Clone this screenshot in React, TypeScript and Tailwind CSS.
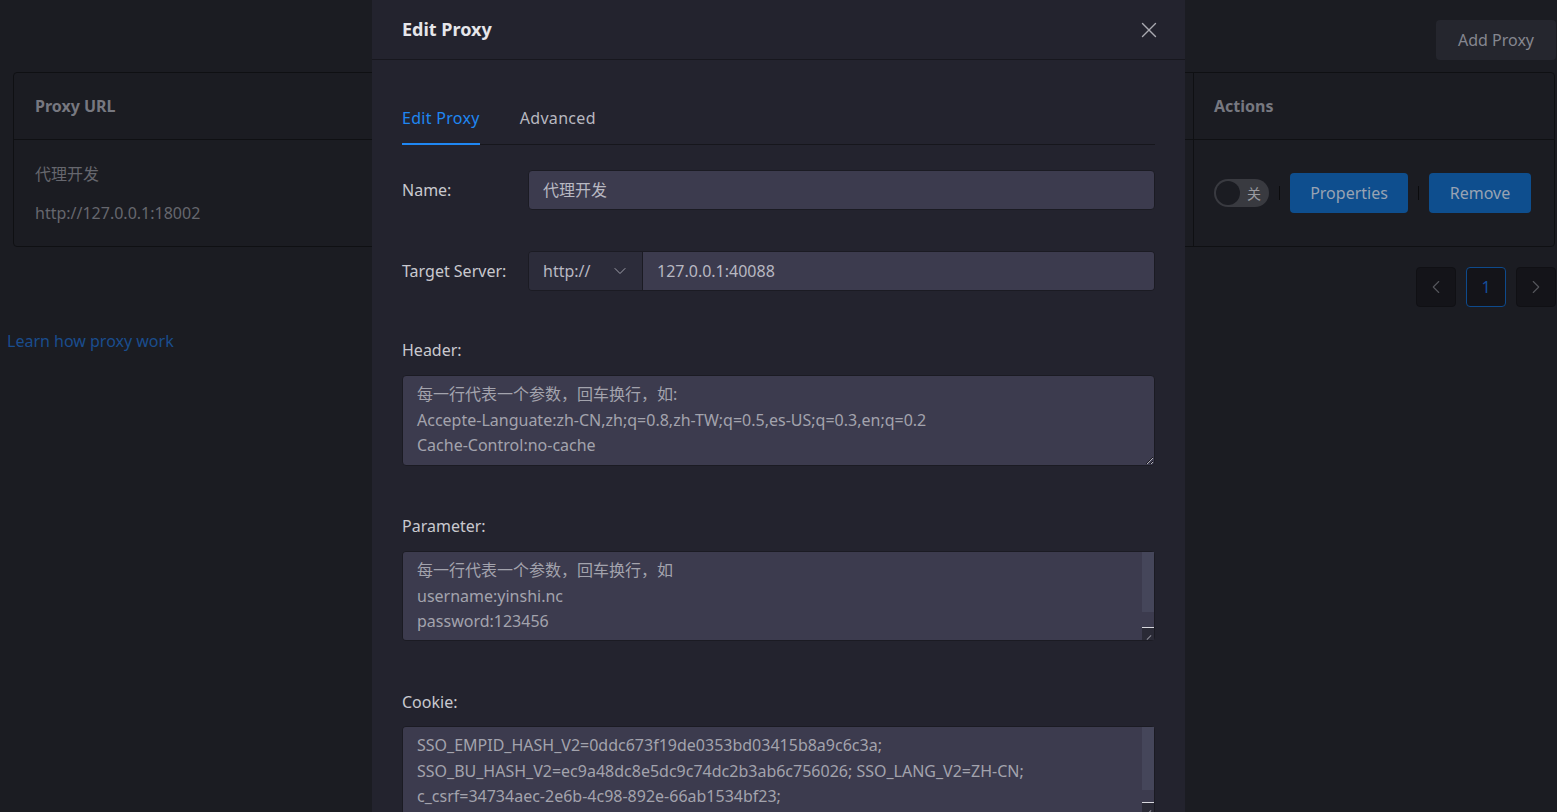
import { X, ChevronDown, ChevronLeft, ChevronRight } from "lucide-react";

const font = "[font-family:'Noto_Sans','Noto_Sans_CJK_SC',sans-serif]";

const areaClass =
  "block w-full rounded-[4px] border border-[#1b1b23] bg-[#3c3b4e] px-[14px] py-[6px] text-[16px] leading-[25.6px] text-[#a3a3ad] outline-none";

// fake scrollbar drawn over a textarea (headless browser hides real ones)
const FakeScroll = ({ thumb }: { thumb: number }) => (
  <div className="pointer-events-none absolute bottom-[1px] right-[1px] top-[1px] flex w-[12px] flex-col">
    <div className="bg-[#45465a]" style={{ height: thumb }} />
    <div className="flex-1" />
    <div className="relative h-[13px] border-t border-[#d8d8de] bg-[#2a2a36]">
      <span className="absolute bottom-[2px] right-[2px] h-px w-[6px] -rotate-45 bg-[#8a8a95]" />
    </div>
  </div>
);

export default function App() {
  return (
    <div className={`relative h-[812px] w-full overflow-hidden bg-[#1b1c22] ${font}`}>
      {/* page behind the dialog */}
      <div className="flex flex-col pt-[20px]">
        <div className="flex justify-end pr-[1px]">
          <button className="h-[40px] w-[120px] rounded-[4px] bg-[#25262e] text-[16px] text-[#858690]">
            Add Proxy
          </button>
        </div>
        <div className="ml-[13px] mr-[2px] mt-[12px] rounded-[4px] border border-[#0f1013]">
          <div className="flex h-[67px] border-b border-[#0f1013]">
            <div className="flex flex-1 items-center pl-[21px] text-[16px] font-bold text-[#777880]">Proxy URL</div>
            <div className="flex w-[361px] items-center border-l border-[#0f1013] pl-[20px] text-[16px] font-bold text-[#777880]">
              Actions
            </div>
          </div>
          <div className="flex h-[106px]">
            <div className="flex flex-1 flex-col justify-center gap-[13px] pl-[21px] text-[16px] text-[#66676e]">
              <span className="leading-[26px]">代理开发</span>
              <span className="leading-[26px]">http://127.0.0.1:18002</span>
            </div>
            <div className="flex w-[361px] items-center border-l border-[#0f1013] pl-[20px]">
              <div className="flex h-[28px] w-[55px] items-center rounded-full bg-[#393a40] px-[2px]">
                <span className="h-[24px] w-[24px] rounded-full bg-[#1b1c22]" />
                <span className="ml-[7px] text-[14px] text-[#9a9aa0]">关</span>
              </div>
              <span className="mx-[10px] h-[14px] w-px bg-[#0b0b0d]" />
              <button className="h-[40px] w-[118px] rounded-[4px] bg-[#0e4e8e] text-[16px] text-[#98a3b3]">
                Properties
              </button>
              <span className="mx-[10px] h-[14px] w-px bg-[#0b0b0d]" />
              <button className="h-[40px] w-[102px] rounded-[4px] bg-[#0e4e8e] text-[16px] text-[#98a3b3]">
                Remove
              </button>
            </div>
          </div>
        </div>
        <div className="mt-[20px] flex justify-end gap-[10px] pr-[1px]">
          <button className="flex h-[40px] w-[40px] items-center justify-center rounded-[4px] border border-[#101014] bg-[#141419] text-[#55565c]">
            <ChevronLeft size={22} strokeWidth={1.2} />
          </button>
          <button className="flex h-[40px] w-[40px] items-center justify-center rounded-[4px] border border-[#0e4a8c] bg-[#141419] text-[16px] text-[#144e9c]">
            1
          </button>
          <button className="flex h-[40px] w-[40px] items-center justify-center rounded-[4px] border border-[#101014] bg-[#141419] text-[#55565c]">
            <ChevronRight size={22} strokeWidth={1.2} />
          </button>
        </div>
        <a className="ml-[7px] mt-[23px] text-[16px] leading-[22px] text-[#1a4d8e]">Learn how proxy work</a>
      </div>

      {/* dialog */}
      <div className="absolute inset-0 flex justify-center">
        <div className="flex h-full w-[813px] flex-col bg-[#23232e]">
          <div className="flex h-[60px] shrink-0 items-center justify-between border-b border-[#17171e] pl-[30px] pr-[23px]">
            <span className="text-[18px] font-bold text-[#e6e6ea]">Edit Proxy</span>
            <X size={26} strokeWidth={1.3} className="text-[#a9a9b0]" />
          </div>
          <div className="flex flex-col px-[30px]">
            <div className="mt-[46px] flex gap-[40px] border-b border-[#16161c]">
              <span className="-mb-px border-b-2 border-[#1f87f3] pb-[13px] text-[16px] leading-[24px] tracking-[0.3px] text-[#1f87f3]">
                Edit Proxy
              </span>
              <span className="pb-[13px] text-[16px] leading-[24px] tracking-[0.3px] text-[#b8b8c0]">Advanced</span>
            </div>

            <div className="mt-[25px] flex items-center">
              <span className="w-[126px] text-[16px] text-[#c9c9cf]">Name:</span>
              <div className="flex h-[40px] flex-1 items-center rounded-[4px] border border-[#1b1b23] bg-[#3c3b4e] px-[14px] text-[16px] text-[#b8b8c2]">
                代理开发
              </div>
            </div>

            <div className="mt-[41px] flex items-center">
              <span className="w-[126px] text-[16px] text-[#c9c9cf]">Target Server:</span>
              <div className="flex h-[40px] flex-1 overflow-hidden rounded-[4px] border border-[#1b1b23]">
                <div className="flex w-[113px] items-center justify-between bg-[#2c2c3a] pl-[14px] pr-[12px] text-[16px] text-[#b8b8c2]">
                  <span>http://</span>
                  <ChevronDown size={20} strokeWidth={1.2} className="text-[#a0a0aa]" />
                </div>
                <div className="flex flex-1 items-center border-l border-[#1b1b23] bg-[#3c3b4e] px-[14px] text-[16px] text-[#b8b8c2]">
                  127.0.0.1:40088
                </div>
              </div>
            </div>

            <span className="mt-[48px] text-[16px] leading-[22px] text-[#c9c9cf]">Header:</span>
            <textarea
              readOnly
              className={`mt-[14px] h-[91px] ${areaClass}`}
              defaultValue={
                "每一行代表一个参数，回车换行，如:\nAccepte-Languate:zh-CN,zh;q=0.8,zh-TW;q=0.5,es-US;q=0.3,en;q=0.2\nCache-Control:no-cache"
              }
            />

            <span className="mt-[49px] text-[16px] leading-[22px] text-[#c9c9cf]">Parameter:</span>
            <div className="relative mt-[14px]">
              <textarea
                readOnly
                className={`h-[90px] resize-none ${areaClass}`}
                defaultValue={"每一行代表一个参数，回车换行，如\nusername:yinshi.nc\npassword:123456"}
              />
              <FakeScroll thumb={60} />
            </div>

            <span className="mt-[50px] text-[16px] leading-[22px] text-[#c9c9cf]">Cookie:</span>
            <div className="relative mt-[13px]">
              <textarea
                readOnly
                className={`h-[90px] resize-none ${areaClass}`}
                defaultValue={
                  "SSO_EMPID_HASH_V2=0ddc673f19de0353bd03415b8a9c6c3a;\nSSO_BU_HASH_V2=ec9a48dc8e5dc9c74dc2b3ab6c756026; SSO_LANG_V2=ZH-CN;\nc_csrf=34734aec-2e6b-4c98-892e-66ab1534bf23;"
                }
              />
              <FakeScroll thumb={63} />
            </div>
          </div>
        </div>
      </div>
    </div>
  );
}
